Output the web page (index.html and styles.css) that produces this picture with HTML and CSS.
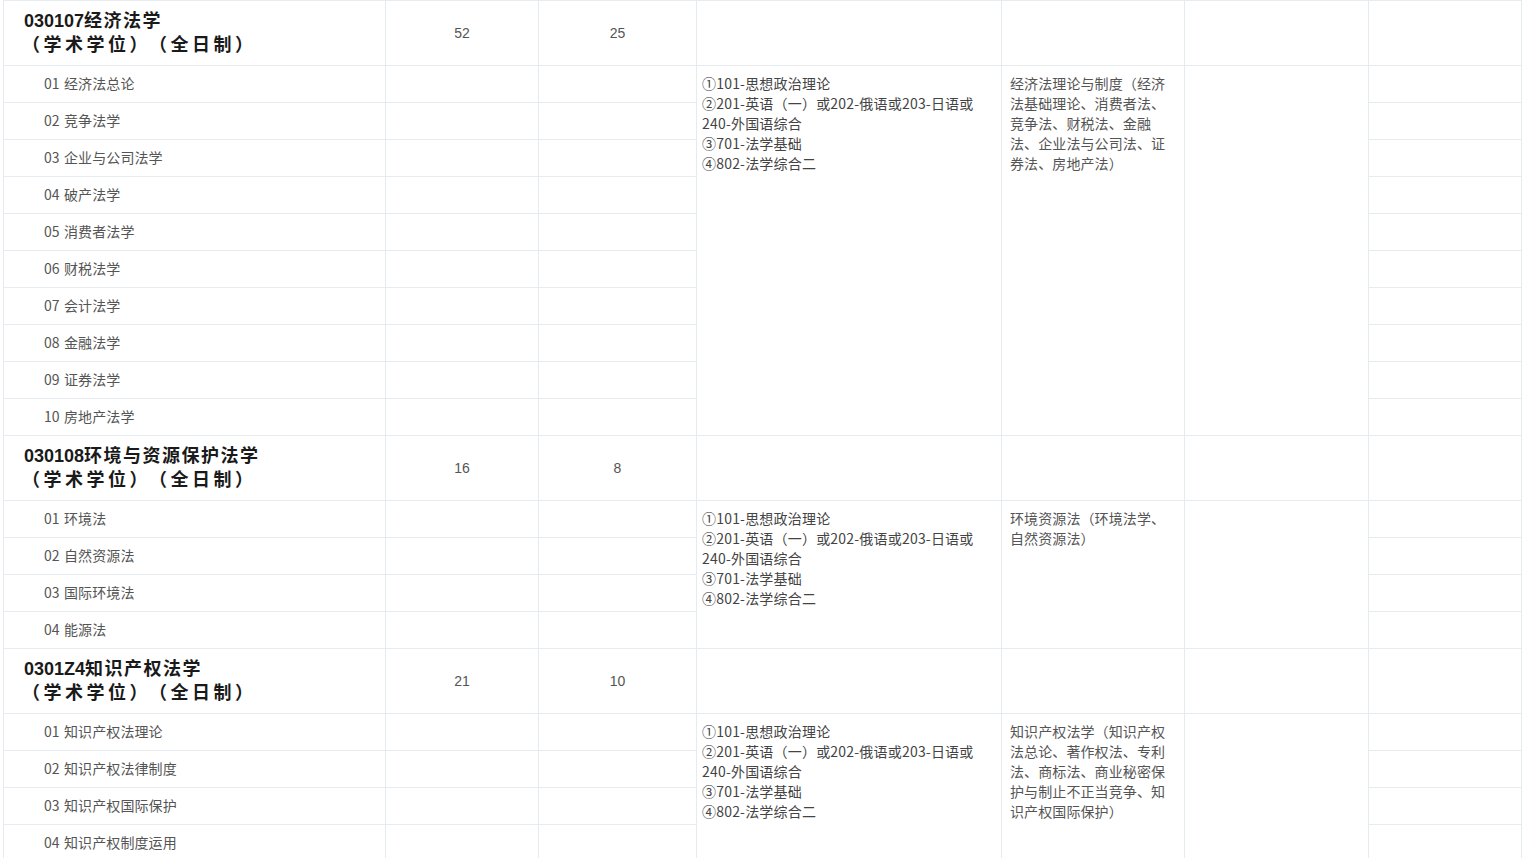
FILE: index.html
```html
<!DOCTYPE html>
<html lang="zh-CN">
<head>
<meta charset="utf-8">
<title>专业目录</title>
<link rel="stylesheet" href="styles.css">
</head>
<body>
<table class="catalog">
  <colgroup>
    <col class="c1"><col class="c2"><col class="c3"><col class="c4"><col class="c5"><col class="c6"><col class="c7">
  </colgroup>
  <tbody>
    <tr class="major">
      <td class="title"><div class="line1"><span class="code">030107</span><span class="cn">经济法学</span></div><div class="line2"><span>（学术学位）</span><span class="mode">（全日制）</span></div></td>
      <td class="num">52</td>
      <td class="num">25</td>
      <td></td><td></td><td></td><td></td>
    </tr>
    <tr class="dir">
      <td class="name">01 经济法总论</td><td></td><td></td>
      <td class="exam" rowspan="10">①101-思想政治理论<br>②201-英语（一）或202-俄语或203-日语或240-外国语综合<br>③701-法学基础<br>④802-法学综合二</td>
      <td class="retest" rowspan="10">经济法理论与制度（经济法基础理论、消费者法、竞争法、财税法、金融法、企业法与公司法、证券法、房地产法）</td>
      <td rowspan="10"></td>
      <td></td>
    </tr>
    <tr class="dir"><td class="name">02 竞争法学</td><td></td><td></td><td></td></tr>
    <tr class="dir"><td class="name">03 企业与公司法学</td><td></td><td></td><td></td></tr>
    <tr class="dir"><td class="name">04 破产法学</td><td></td><td></td><td></td></tr>
    <tr class="dir"><td class="name">05 消费者法学</td><td></td><td></td><td></td></tr>
    <tr class="dir"><td class="name">06 财税法学</td><td></td><td></td><td></td></tr>
    <tr class="dir"><td class="name">07 会计法学</td><td></td><td></td><td></td></tr>
    <tr class="dir"><td class="name">08 金融法学</td><td></td><td></td><td></td></tr>
    <tr class="dir"><td class="name">09 证券法学</td><td></td><td></td><td></td></tr>
    <tr class="dir"><td class="name">10 房地产法学</td><td></td><td></td><td></td></tr>

    <tr class="major">
      <td class="title"><div class="line1"><span class="code">030108</span><span class="cn">环境与资源保护法学</span></div><div class="line2"><span>（学术学位）</span><span class="mode">（全日制）</span></div></td>
      <td class="num">16</td>
      <td class="num">8</td>
      <td></td><td></td><td></td><td></td>
    </tr>
    <tr class="dir">
      <td class="name">01 环境法</td><td></td><td></td>
      <td class="exam" rowspan="4">①101-思想政治理论<br>②201-英语（一）或202-俄语或203-日语或240-外国语综合<br>③701-法学基础<br>④802-法学综合二</td>
      <td class="retest" rowspan="4">环境资源法（环境法学、自然资源法）</td>
      <td rowspan="4"></td>
      <td></td>
    </tr>
    <tr class="dir"><td class="name">02 自然资源法</td><td></td><td></td><td></td></tr>
    <tr class="dir"><td class="name">03 国际环境法</td><td></td><td></td><td></td></tr>
    <tr class="dir"><td class="name">04 能源法</td><td></td><td></td><td></td></tr>

    <tr class="major">
      <td class="title"><div class="line1"><span class="code">0301Z4</span><span class="cn">知识产权法学</span></div><div class="line2"><span>（学术学位）</span><span class="mode">（全日制）</span></div></td>
      <td class="num">21</td>
      <td class="num">10</td>
      <td></td><td></td><td></td><td></td>
    </tr>
    <tr class="dir">
      <td class="name">01 知识产权法理论</td><td></td><td></td>
      <td class="exam" rowspan="4">①101-思想政治理论<br>②201-英语（一）或202-俄语或203-日语或240-外国语综合<br>③701-法学基础<br>④802-法学综合二</td>
      <td class="retest" rowspan="4">知识产权法学（知识产权法总论、著作权法、专利法、商标法、商业秘密保护与制止不正当竞争、知识产权国际保护）</td>
      <td rowspan="4"></td>
      <td></td>
    </tr>
    <tr class="dir"><td class="name">02 知识产权法律制度</td><td></td><td></td><td></td></tr>
    <tr class="dir"><td class="name">03 知识产权国际保护</td><td></td><td></td><td></td></tr>
    <tr class="dir"><td class="name">04 知识产权制度运用</td><td></td><td></td><td></td></tr>
  </tbody>
</table>
</body>
</html>
```
FILE: styles.css
```css
html, body {
  margin: 0;
  padding: 0;
  background: #ffffff;
}
body {
  font-family: "Noto Sans CJK SC", "Noto Sans", sans-serif;
  font-size: 14px;
  color: #444;
}
.catalog {
  margin-left: 3px;
  border-collapse: collapse;
  table-layout: fixed;
  width: 1518px;
}
.c1 { width: 382px; }
.c2 { width: 153px; }
.c3 { width: 158px; }
.c4 { width: 305px; }
.c5 { width: 183px; }
.c6 { width: 184px; }
.c7 { width: 153px; }
.catalog td {
  border: 1px solid #e6ebf0;
  padding: 0;
  vertical-align: middle;
}
.major { height: 65px; }
.dir { height: 37px; }
.title {
  padding: 0 0 2px 20px !important;
  color: #1a1a1a;
  font-weight: 700;
  font-size: 18px;
}
.line1, .line2 {
  height: 24px;
  line-height: 24px;
  white-space: nowrap;
  overflow: visible;
}
.line1 {
  margin-top: -2px;
}
.line2 {
  letter-spacing: 3.5px;
  text-indent: -2px;
}
.code {
  font-family: "Liberation Sans", Arial, sans-serif;
}
.cn {
  letter-spacing: 1.5px;
}
.mode {
  margin-left: 7px;
}
.num {
  text-align: center;
  color: #555;
  font-family: "Liberation Sans", "Noto Sans CJK SC", sans-serif;
  font-size: 14px;
}
.name {
  padding: 0 0 2px 40px !important;
  color: #555;
  font-size: 14px;
  word-spacing: 1px;
}
.name, .exam, .retest {
  letter-spacing: 0.1px;
}
.exam {
  vertical-align: top !important;
  padding: 7px 5px 0 5px !important;
  line-height: 20px;
  color: #444;
  letter-spacing: 0.2px;
}
.retest {
  vertical-align: top !important;
  padding: 7px 8px 0 8px !important;
  line-height: 20px;
  color: #555;
}
```
